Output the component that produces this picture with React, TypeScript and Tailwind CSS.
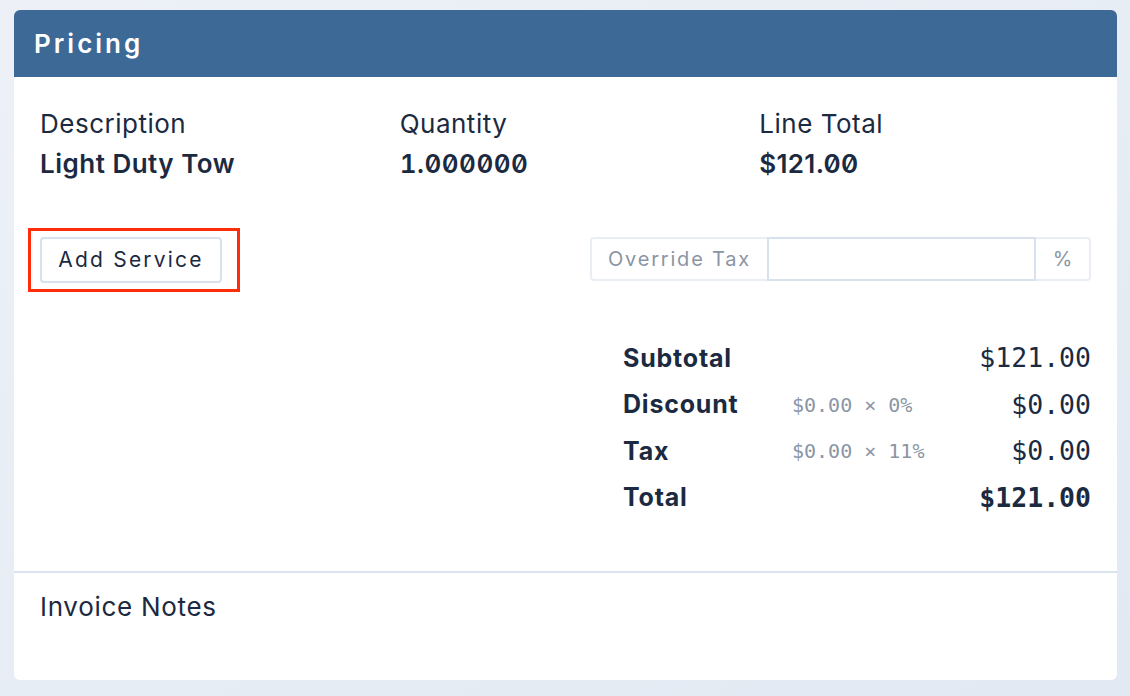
import React from "react";

const sans = { fontFamily: "Inter, 'Noto Sans', sans-serif" };
const mono = { fontFamily: "'DejaVu Sans Mono', 'Liberation Mono', monospace" };
const slashed = { fontFamily: "Inter, 'Noto Sans', sans-serif", fontFeatureSettings: "'zero' 1, 'tnum' 1" };
const slashedProp = { fontFamily: "Inter, 'Noto Sans', sans-serif", fontFeatureSettings: "'zero' 1" };

export default function App() {
  return (
    <div className="w-[1130px] h-[696px] bg-gradient-to-br from-[#edf1f7] to-[#e2e9f2] pt-[10px] px-[13px] text-[#1b2a41]" style={sans}>
      <div className="w-[1103px] ml-[1px] bg-white rounded-[6px] overflow-hidden">
        <div className="h-[67px] bg-[#3d6997] flex items-center px-[20px]">
          <span className="text-white text-[26px] font-semibold tracking-[3px]">Pricing</span>
        </div>
        <div className="px-[26px] pt-[27px]">
          <div className="grid grid-cols-3 gap-x-[28px] text-[26px] leading-[40px] tracking-[0.5px]">
            <div>
              <div>Description</div>
              <div className="font-semibold">Light Duty Tow</div>
            </div>
            <div>
              <div>Quantity</div>
              <div className="font-semibold" style={slashed}>1.000000</div>
            </div>
            <div>
              <div>Line Total</div>
              <div className="font-semibold tracking-[0.3px]" style={slashedProp}>$121.00</div>
            </div>
          </div>

          <div className="flex items-start justify-between mt-[44px] -ml-[12px]">
            <div className="border-[3px] border-[#ff2d0a] pl-[9px] pr-[15px] py-[6px]">
              <button className="h-[46px] w-[182px] border-2 border-[#d7e2ee] rounded-[4px] bg-white text-[21px] tracking-[2.2px] text-[#1b2a41]">
                Add Service
              </button>
            </div>
            <div className="mt-[9px] w-[501px] h-[44px] flex border-2 border-[#e9eef4] rounded-[4px]">
              <div className="w-[175px] flex items-center justify-center text-[20px] tracking-[1.8px] text-[#8b95a5]">Override Tax</div>
              <div className="flex-1 border-2 -my-[2px] border-[#d7e2ee]"></div>
              <div className="w-[53px] flex items-center justify-center text-[20px] text-[#8b95a5]">%</div>
            </div>
          </div>

          <div className="ml-auto w-[468px] mt-[43px] grid grid-cols-[169px_1fr_auto] items-center">
            <div className="h-[46.5px] flex items-center text-[25px] font-bold tracking-[0.8px]">Subtotal</div>
            <div></div>
            <div className="text-[26.5px] text-right" style={mono}>$121.00</div>

            <div className="h-[46.5px] flex items-center text-[25px] font-bold tracking-[0.8px]">Discount</div>
            <div className="text-[20px] text-[#8b95a5]" style={mono}>$0.00 × 0%</div>
            <div className="text-[26.5px] text-right" style={mono}>$0.00</div>

            <div className="h-[46.5px] flex items-center text-[25px] font-bold tracking-[0.8px]">Tax</div>
            <div className="text-[20px] text-[#8b95a5]" style={mono}>$0.00 × 11%</div>
            <div className="text-[26.5px] text-right" style={mono}>$0.00</div>

            <div className="h-[46.5px] flex items-center text-[25px] font-bold tracking-[0.8px]">Total</div>
            <div></div>
            <div className="text-[26.5px] font-bold text-right" style={mono}>$121.00</div>
          </div>
          <div className="h-[50px]"></div>
        </div>
        <div className="h-[2px] bg-[#dbe4ee]"></div>
        <div className="px-[26px] pt-[14px] pb-[53px] text-[26px] leading-[40px] tracking-[0.7px]">Invoice Notes</div>
      </div>
    </div>
  );
}
